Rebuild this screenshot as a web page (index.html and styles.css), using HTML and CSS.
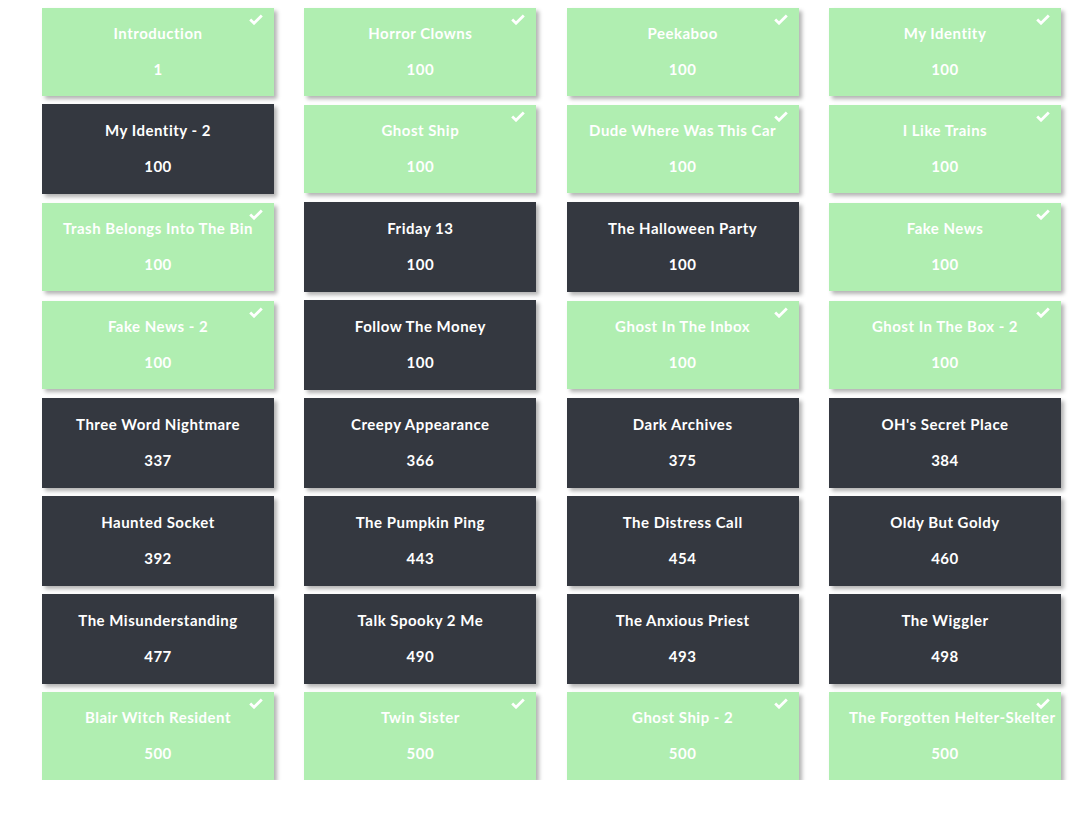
FILE: index.html
```html
<!DOCTYPE html>
<html>
<head>
    <title>Challenges</title>
    <link rel="stylesheet" href="styles.css">
</head>
<body>
    <div class="board">
        <!-- row 1 -->
        <div class="card solved"><div class="title">Introduction</div><div class="points">1</div></div>
        <div class="card solved"><div class="title">Horror Clowns</div><div class="points">100</div></div>
        <div class="card solved"><div class="title">Peekaboo</div><div class="points">100</div></div>
        <div class="card solved"><div class="title">My Identity</div><div class="points">100</div></div>
        <!-- row 2 -->
        <div class="card"><div class="title">My Identity - 2</div><div class="points">100</div></div>
        <div class="card solved"><div class="title">Ghost Ship</div><div class="points">100</div></div>
        <div class="card solved"><div class="title">Dude Where Was This Car</div><div class="points">100</div></div>
        <div class="card solved"><div class="title">I Like Trains</div><div class="points">100</div></div>
        <!-- row 3 -->
        <div class="card solved"><div class="title">Trash Belongs Into The Bin</div><div class="points">100</div></div>
        <div class="card"><div class="title">Friday 13</div><div class="points">100</div></div>
        <div class="card"><div class="title">The Halloween Party</div><div class="points">100</div></div>
        <div class="card solved"><div class="title">Fake News</div><div class="points">100</div></div>
        <!-- row 4 -->
        <div class="card solved"><div class="title">Fake News - 2</div><div class="points">100</div></div>
        <div class="card"><div class="title">Follow The Money</div><div class="points">100</div></div>
        <div class="card solved"><div class="title">Ghost In The Inbox</div><div class="points">100</div></div>
        <div class="card solved"><div class="title">Ghost In The Box - 2</div><div class="points">100</div></div>
        <!-- row 5 -->
        <div class="card"><div class="title">Three Word Nightmare</div><div class="points">337</div></div>
        <div class="card"><div class="title">Creepy Appearance</div><div class="points">366</div></div>
        <div class="card"><div class="title">Dark Archives</div><div class="points">375</div></div>
        <div class="card"><div class="title">OH's Secret Place</div><div class="points">384</div></div>
        <!-- row 6 -->
        <div class="card"><div class="title">Haunted Socket</div><div class="points">392</div></div>
        <div class="card"><div class="title">The Pumpkin Ping</div><div class="points">443</div></div>
        <div class="card"><div class="title">The Distress Call</div><div class="points">454</div></div>
        <div class="card"><div class="title">Oldy But Goldy</div><div class="points">460</div></div>
        <!-- row 7 -->
        <div class="card"><div class="title">The Misunderstanding</div><div class="points">477</div></div>
        <div class="card"><div class="title">Talk Spooky 2 Me</div><div class="points">490</div></div>
        <div class="card"><div class="title">The Anxious Priest</div><div class="points">493</div></div>
        <div class="card"><div class="title">The Wiggler</div><div class="points">498</div></div>
        <!-- row 8 -->
        <div class="card solved"><div class="title">Blair Witch Resident</div><div class="points">500</div></div>
        <div class="card solved"><div class="title">Twin Sister</div><div class="points">500</div></div>
        <div class="card solved"><div class="title">Ghost Ship - 2</div><div class="points">500</div></div>
        <div class="card solved"><div class="title">The Forgotten Helter-Skelter</div><div class="points">500</div></div>
    </div>

    <script>
        // 解いた問題にチェックマークを付ける
        document.querySelectorAll(".card.solved").forEach((card) => {
            const mark = document.createElement("span");
            mark.className = "check";
            mark.innerHTML = '<svg viewBox="0 0 14 11" width="14" height="11"><path d="M1.2 5.6 L5 9.2 L12.8 1.4" fill="none" stroke="#fff" stroke-width="2.8"/></svg>';
            card.appendChild(mark);
        });
    </script>
</body>
</html>
```

FILE: styles.css
```css
body {
    font-family: Lato, "Open Sans", sans-serif;
    background-color: #fff;
    margin: 0;
    padding: 0;
}
.board {
    display: grid;
    grid-template-columns: repeat(4, 232px);
    column-gap: 30.33px;
    row-gap: 8px;
    align-items: center;
    padding: 8px 0 0 42px;
}
.card {
    position: relative;
    height: 90px;
    box-sizing: border-box;
    padding: 17px 20px 0;
    background-color: #343840;
    color: #fff;
    text-align: center;
    font-weight: bold;
    font-size: 15px;
    letter-spacing: 0.5px;
    box-shadow: 3px 3px 4px rgba(0, 0, 0, 0.3);
}
.card.solved {
    height: 88px;
    padding-top: 16px;
    background-color: #b0eeb1;
}
.title {
    line-height: 18px;
    white-space: nowrap;
}
.points {
    line-height: 18px;
    margin-top: 18px;
}
.check {
    position: absolute;
    top: 6px;
    right: 11px;
    line-height: 0;
}
```
